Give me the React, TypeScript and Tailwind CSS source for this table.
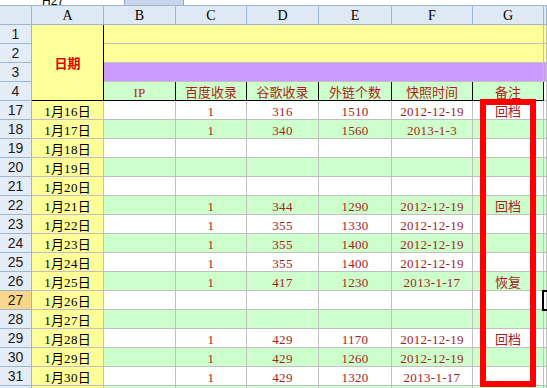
import React from "react";

type Row = {
  n: number;
  date: string;
  c?: string;
  d?: string;
  e?: string;
  f?: string;
  g?: string;
};

const rows: Row[] = [
  { n: 17, date: "1月16日", c: "1", d: "316", e: "1510", f: "2012-12-19", g: "回档" },
  { n: 18, date: "1月17日", c: "1", d: "340", e: "1560", f: "2013-1-3" },
  { n: 19, date: "1月18日" },
  { n: 20, date: "1月19日" },
  { n: 21, date: "1月20日" },
  { n: 22, date: "1月21日", c: "1", d: "344", e: "1290", f: "2012-12-19", g: "回档" },
  { n: 23, date: "1月22日", c: "1", d: "355", e: "1330", f: "2012-12-19" },
  { n: 24, date: "1月23日", c: "1", d: "355", e: "1400", f: "2012-12-19" },
  { n: 25, date: "1月24日", c: "1", d: "355", e: "1400", f: "2012-12-19" },
  { n: 26, date: "1月25日", c: "1", d: "417", e: "1230", f: "2013-1-17", g: "恢复" },
  { n: 27, date: "1月26日" },
  { n: 28, date: "1月27日" },
  { n: 29, date: "1月28日", c: "1", d: "429", e: "1170", f: "2012-12-19", g: "回档" },
  { n: 30, date: "1月29日", c: "1", d: "429", e: "1260", f: "2012-12-19" },
  { n: 31, date: "1月30日", c: "1", d: "429", e: "1320", f: "2013-1-17" },
  { n: 32, date: "" },
];

const cjk = /[\u3000-\u9fff\uff00-\uffef]/;

function Txt({ s }: { s?: string }) {
  if (!s) return null;
  const parts: { t: string; c: boolean }[] = [];
  for (const ch of s) {
    const c = cjk.test(ch);
    const last = parts[parts.length - 1];
    if (last && last.c === c) last.t += ch;
    else parts.push({ t: ch, c });
  }
  return (
    <span className="whitespace-nowrap leading-none">
      {parts.map((p, i) =>
        p.c ? (
          <span key={i} className="font-['Noto_Sans_CJK_SC',sans-serif] text-[13px]">
            {p.t}
          </span>
        ) : (
          <span key={i} className="font-['Liberation_Serif',serif] text-[13px] tracking-[0.3px]">
            {p.t}
          </span>
        )
      )}
    </span>
  );
}

const hdr =
  "bg-[#dfe8f5] border-r border-b border-[#9eb6ce] flex items-center justify-center text-black";
const rowHdr =
  "border-r border-b border-[#9eb6ce] flex items-center justify-center text-[14px] font-['Liberation_Sans',sans-serif] text-[#1a1a1a]";
const grid = "border-r border-b border-[#c0c0c0] flex items-center justify-center";

export default function App() {
  return (
    <div className="relative w-[547px] h-[388px] overflow-hidden bg-white">
      {/* formula bar remnant */}
      <div className="flex h-[6px] bg-white border-b border-[#9eb6ce] overflow-hidden">
        <div className="w-[124px] relative overflow-hidden">
          <span className="absolute left-[42px] -top-[8px] text-[12px] font-['Liberation_Sans',sans-serif] text-black">
            H27
          </span>
        </div>
        <div className="w-[60px] bg-[#c8d6ea] border-x border-[#8ea6c6]" />
        <div className="flex-1" />
      </div>

      <div className="grid grid-cols-[32px_72px_72px_71px_72px_73px_81px_71px_1fr] auto-rows-[19px]">
        {/* column headers */}
        <div className={hdr} />
        {["A", "B", "C", "D", "E", "F", "G", ""].map((l, i) => (
          <div key={i} className={`${hdr} font-['Liberation_Serif',serif] text-[14px]`}>
            {l}
          </div>
        ))}

        {/* row 1 */}
        <div className={`${rowHdr} bg-[#e4ecf7]`}>1</div>
        <div className="row-span-4 bg-[#ffff99] border-r border-b border-[#000000] flex items-center justify-center">
          <span className="font-['Noto_Sans_CJK_SC',sans-serif] font-bold text-[13px] text-[#e00000] leading-none">
            日期
          </span>
        </div>
        <div className={`${grid} col-span-6 bg-[#ffff99]`} />
        <div className={`${grid} bg-[#ffff99]`} />

        {/* row 2 */}
        <div className={`${rowHdr} bg-[#e4ecf7]`}>2</div>
        <div className={`${grid} col-span-6 bg-[#ffff99]`} />
        <div className={`${grid} bg-[#ffff99]`} />

        {/* row 3 */}
        <div className={`${rowHdr} bg-[#e4ecf7]`}>3</div>
        <div className={`${grid} col-span-6 bg-[#cc99ff]`} />
        <div className={`${grid} bg-[#cc99ff]`} />

        {/* row 4 */}
        <div className={`${rowHdr} bg-[#e4ecf7]`}>4</div>
        {["IP", "百度收录", "谷歌收录", "外链个数", "快照时间", "备注"].map((t, i) => (
          <div
            key={i}
            className="bg-[#ccffcc] border-r border-b border-black flex items-center justify-center text-[#b01c1c]"
          >
            <Txt s={t} />
          </div>
        ))}
        <div className={`${grid} bg-white`} />

        {rows.map((r, idx) => {
          const bg = idx % 2 === 1 ? "bg-[#ccffcc]" : "bg-white";
          const sel = r.n === 27;
          return (
            <React.Fragment key={r.n}>
              <div className={`${rowHdr} ${sel ? "bg-[#f8d78c]" : "bg-[#e4ecf7]"}`}>
                {r.n < 32 ? r.n : ""}
              </div>
              <div className={`${grid} bg-[#ffff99] text-black`}>
                <Txt s={r.date} />
              </div>
              <div className={`${grid} ${bg}`} />
              <div className={`${grid} ${bg} text-[#a81c1c]`}>
                <Txt s={r.c} />
              </div>
              <div className={`${grid} ${bg} text-[#a81c1c]`}>
                <Txt s={r.d} />
              </div>
              <div className={`${grid} ${bg} text-[#a81c1c]`}>
                <Txt s={r.e} />
              </div>
              <div className={`${grid} ${bg} text-[#a81c1c]`}>
                <Txt s={r.f} />
              </div>
              <div className={`${grid} ${bg} text-[#a81c1c]`}>
                <Txt s={r.g} />
              </div>
              <div className={`${grid} ${bg}`} />
            </React.Fragment>
          );
        })}
      </div>

      {/* active cell H27 */}
      <div className="absolute left-[542px] top-[290px] w-[12px] h-[21px] border-2 border-black" />

      {/* red annotation box */}
      <div className="absolute left-[480px] top-[99px] w-[56px] h-[288px] border-[6px] border-[#ff0000]" />
    </div>
  );
}
